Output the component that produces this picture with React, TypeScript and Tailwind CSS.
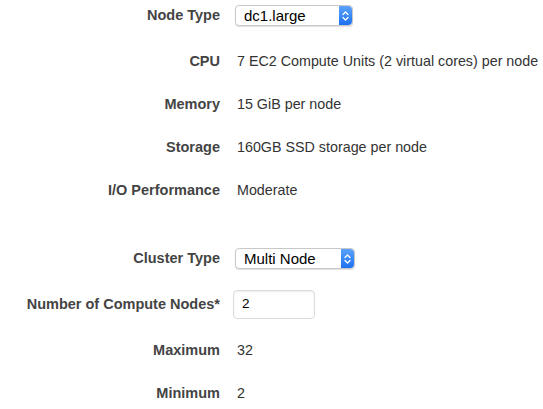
import { ReactNode } from 'react';

const font = { fontFamily: '"Liberation Sans", Arial, sans-serif' };

function Row({ label, children, className = '' }: { label: string; children: ReactNode; className?: string }) {
  return (
    <div className={`flex items-center h-[43px] ${className}`}>
      <div className="w-[220px] shrink-0 text-right text-[14.5px] font-bold text-[#444] whitespace-nowrap">{label}</div>
      {children}
    </div>
  );
}

function Value({ children }: { children: ReactNode }) {
  return <div className="ml-[17px] text-[14.3px] text-[#333] whitespace-nowrap">{children}</div>;
}

function Stepper() {
  return (
    <div className="flex h-full w-[13px] items-center justify-center rounded-r-[4px] bg-gradient-to-b from-[#5aa2fb] to-[#1c6ff0]">
      <svg width="7" height="12" viewBox="0 0 7 12" fill="none" stroke="white" strokeWidth="1.3" strokeLinecap="round" strokeLinejoin="round">
        <path d="M1 4.5 L3.5 2 L6 4.5" />
        <path d="M1 7.5 L3.5 10 L6 7.5" />
      </svg>
    </div>
  );
}

function Select({ value, width }: { value: string; width: string }) {
  return (
    <div
      className={`ml-[15px] flex h-[21px] ${width} items-center justify-between rounded-[4px] border border-[#c8c8c8] bg-white shadow-[0_1px_1px_rgba(0,0,0,0.12)]`}
    >
      <span className="pl-[8px] text-[15px] leading-none text-black">{value}</span>
      <Stepper />
    </div>
  );
}

export default function App() {
  return (
    <div className="w-[543px] h-[409px] bg-white overflow-hidden" style={font}>
      <div className="flex items-center h-[31px]">
        <div className="w-[220px] shrink-0 text-right text-[14.5px] font-bold text-[#444]">Node Type</div>
        <Select value="dc1.large" width="w-[118px]" />
      </div>
      <Row label="CPU" className="mt-[9px]">
        <Value>7 EC2 Compute Units (2 virtual cores) per node</Value>
      </Row>
      <Row label="Memory">
        <Value>15 GiB per node</Value>
      </Row>
      <Row label="Storage">
        <Value>160GB SSD storage per node</Value>
      </Row>
      <Row label="I/O Performance">
        <Value>Moderate</Value>
      </Row>
      <Row label="Cluster Type" className="mt-[25px]">
        <Select value="Multi Node" width="w-[120px]" />
      </Row>
      <Row label="Number of Compute Nodes*" className="mt-[3px]">
        <div className="ml-[13px] flex h-[29px] w-[82px] items-center rounded-[4px] border border-[#dcdcdc] bg-white pl-[8px] text-[13.5px] text-black shadow-[inset_0_1px_2px_rgba(0,0,0,0.08)]">
          2
        </div>
      </Row>
      <Row label="Maximum" className="mt-[3px] h-[42px]">
        <Value>32</Value>
      </Row>
      <Row label="Minimum">
        <Value>2</Value>
      </Row>
    </div>
  );
}
